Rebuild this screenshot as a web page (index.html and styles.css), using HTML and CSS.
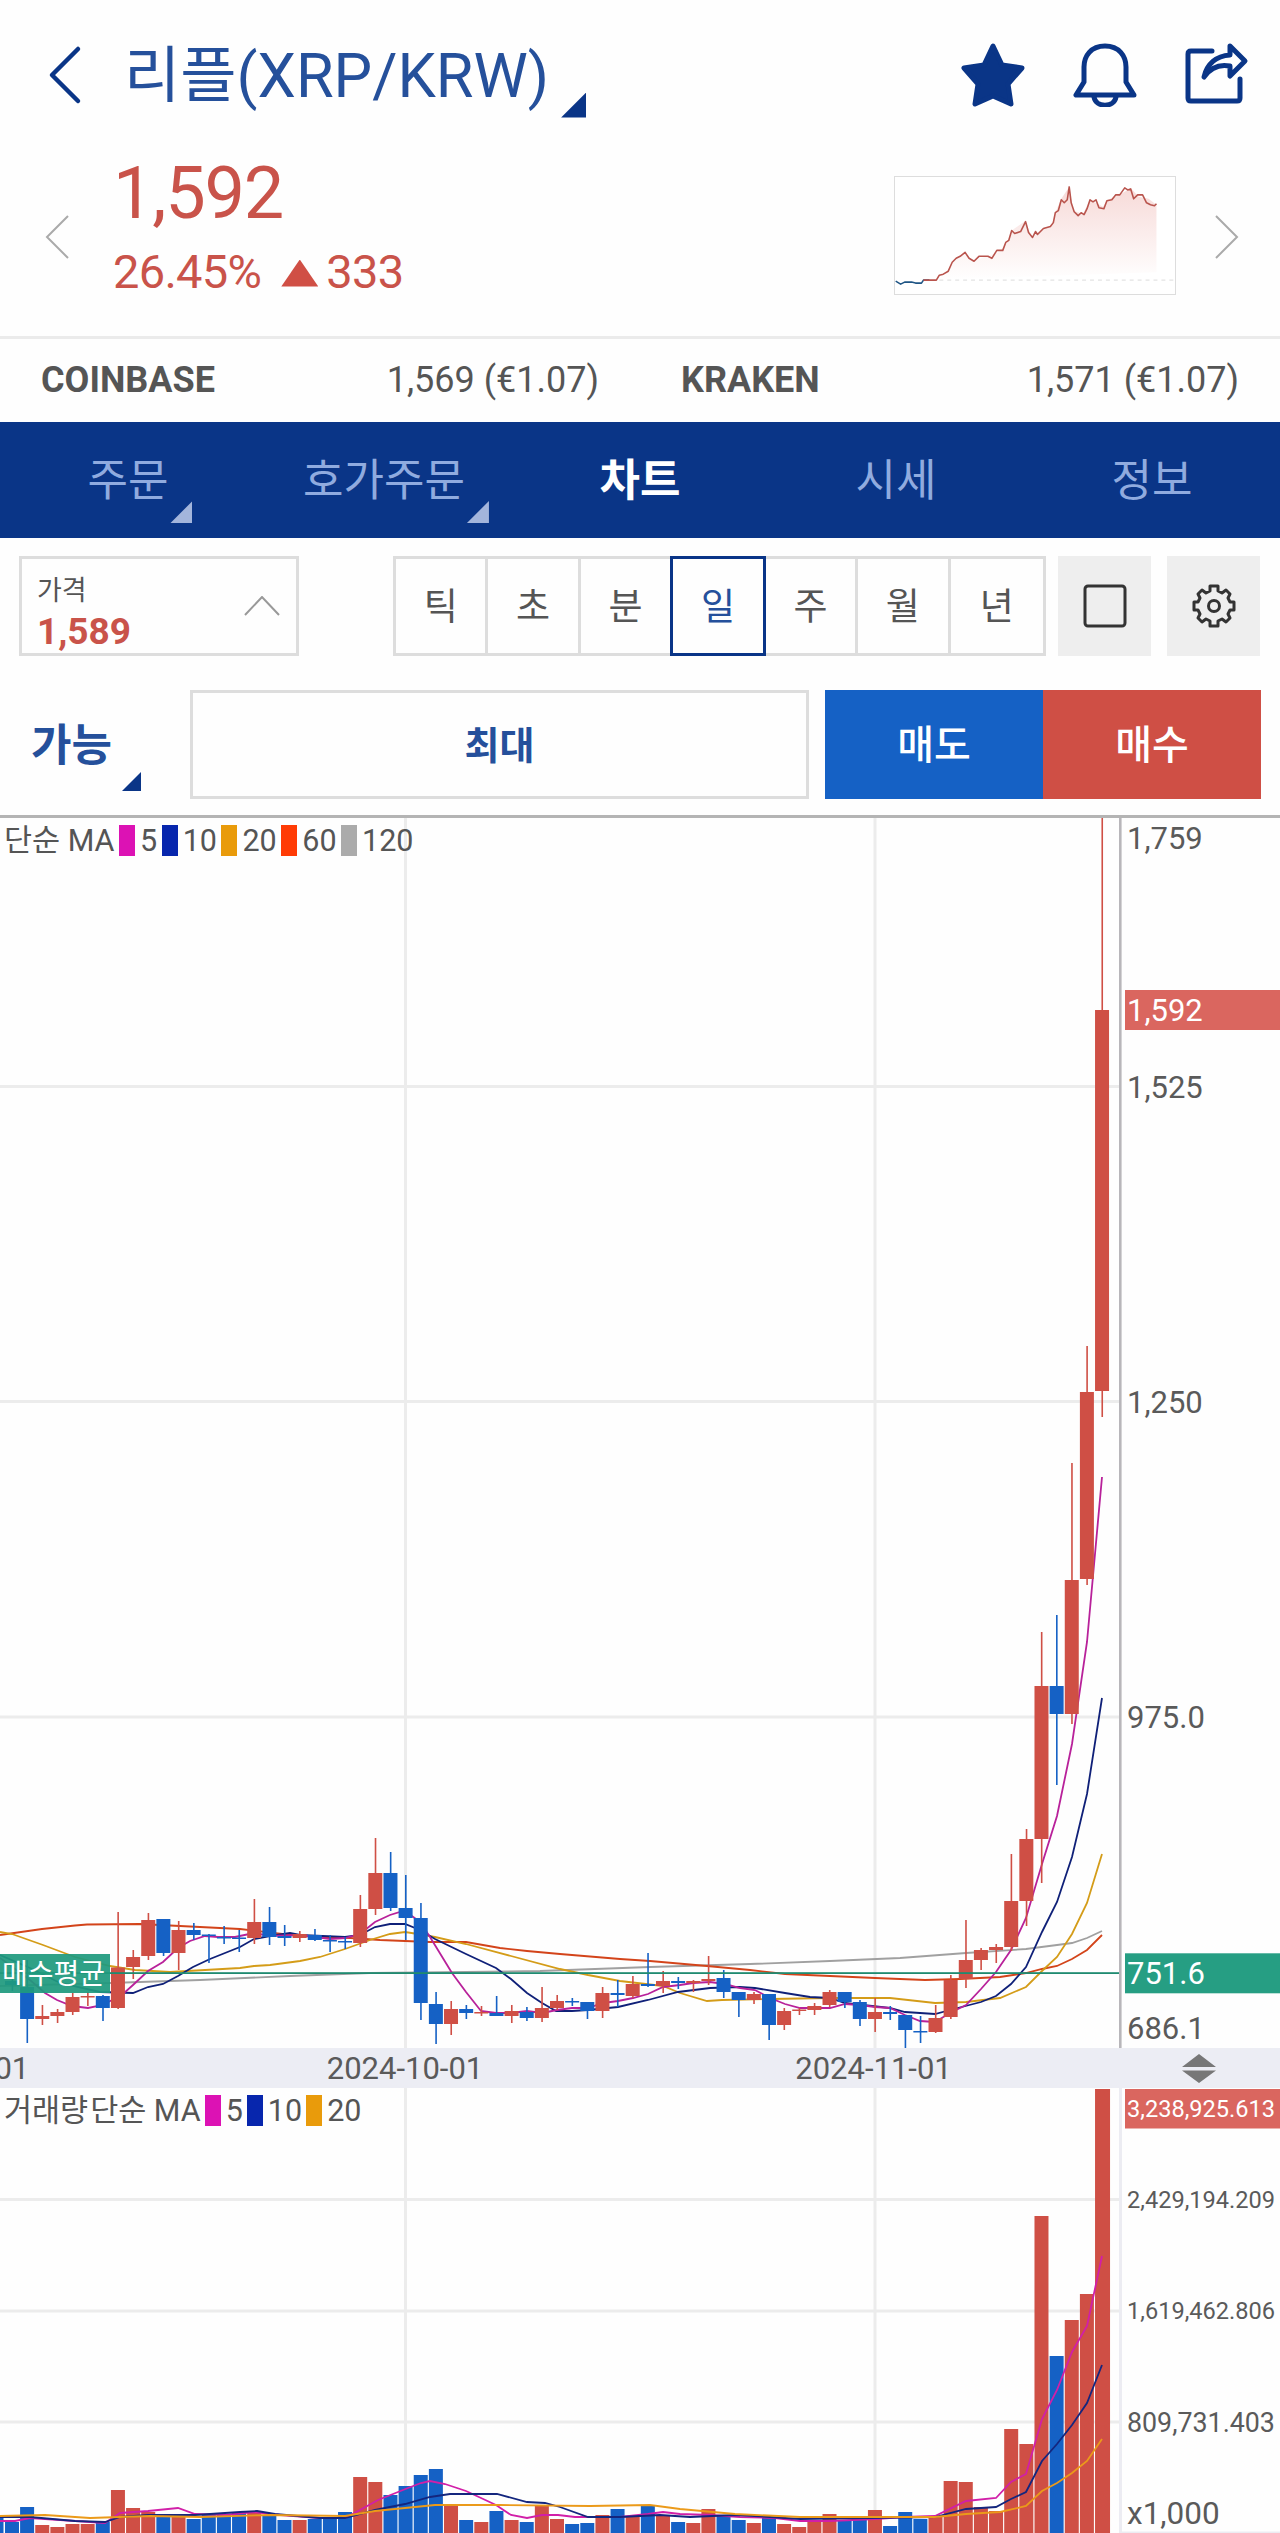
FILE: index.html
```html
<!DOCTYPE html>
<html lang="ko">
<head>
  <meta charset="UTF-8" />
  <meta name="viewport" content="width=device-width, initial-scale=1.0" />
  <title>리플(XRP/KRW)</title>
  <link rel="stylesheet" href="styles.css">
</head>
<body>
  <header class="top-bar">
    <svg class="back" viewBox="0 0 40 64"><path d="M33 6 L7 32 L33 58" /></svg>
    <h1>리플(XRP/KRW)</h1>
    <i class="corner title-corner"></i>
    <div class="top-icons">
      <svg viewBox="0 0 64 64"><path class="solid" d="M32 3 L41 22 L61 25 L47 41 L50 61 L32 53 L14 61 L17 41 L3 25 L23 22 Z" /></svg>
      <svg viewBox="0 0 64 64">
        <path d="M32 3 C18 3 11 13 11 24 V39 L3 52 H61 L53 39 V24 C53 13 46 3 32 3 Z" />
        <path d="M21 54 C23 65 41 65 43 54" />
      </svg>
      <svg viewBox="0 0 64 64">
        <path d="M27 8 H6 Q3 8 3 11 V55 Q3 58 6 58 H52 Q55 58 55 55 V36" />
        <path d="M45 3 L60 18 L45 33 V23 C35 21 26 24 19 34 C22 21 31 13 45 12 Z" />
      </svg>
    </div>
  </header>

  <section class="price">
    <svg class="side" viewBox="0 0 24 44"><path d="M23 1 L2 22 L23 43" /></svg>
    <div class="price-now">
      <div class="last">1,592</div>
      <div class="change"><span>26.45%</span><i class="up"></i><span>333</span></div>
    </div>
    <svg class="spark" viewBox="0 0 281 118">
      <defs>
        <linearGradient id="fade" x1="0" y1="0" x2="0" y2="1">
          <stop offset="0" stop-color="#f7dad8" />
          <stop offset="1" stop-color="#fff" />
        </linearGradient>
      </defs>
      <path fill="url(#fade)" d="M28 104 L41 103 L53 95 L59 85 L69 77 L78 85 L95 79 L104 76 L112 67 L117 54 L131 44 L137 61 L148 52 L157 49 L161 36 L167 22 L175 10 L179 34 L189 37 L196 23 L209 30 L214 23 L226 18 L237 11 L245 20 L255 22 L263 28 L263 96 Z" />
      <path class="dash" d="M44 104 H281" />
      <path class="blue" d="M0 105 L5 108 L9 106 L16 106 L20 107 L26 107 L28 104 L34 104" />
      <path class="red" d="M28 104 L41 104 L44 99 L48 98 L53 95 L57 86 L61 82 L65 80 L70 76 L74 82 L79 85 L84 80 L93 80 L97 82 L102 74 L108 74 L111 66 L114 64 L117 54 L120 57 L126 55 L131 45 L134 56 L138 61 L141 55 L143 58 L149 52 L156 50 L159 46 L161 36 L164 34 L167 23 L170 26 L173 23 L175 10 L177 26 L180 35 L184 39 L187 36 L190 38 L193 32 L196 23 L199 25 L202 23 L205 31 L210 32 L213 24 L218 23 L222 18 L226 18 L231 11 L234 13 L237 12 L240 22 L244 18 L249 18 L253 26 L257 28 L261 29 L263 27" />
    </svg>
    <svg class="side" viewBox="0 0 24 44"><path d="M1 1 L22 22 L1 43" /></svg>
  </section>

  <section class="compare">
    <div><b>COINBASE</b><span>1,569 (€1.07)</span></div>
    <div><b>KRAKEN</b><span>1,571 (€1.07)</span></div>
  </section>

  <nav class="tabs">
    <a>주문<i class="corner"></i></a>
    <a>호가주문<i class="corner"></i></a>
    <a class="active">차트</a>
    <a>시세</a>
    <a>정보</a>
  </nav>

  <div class="toolbar">
    <div class="price-select">
      <div>
        <small>가격</small>
        <strong>1,589</strong>
      </div>
      <svg viewBox="0 0 36 20"><path d="M1 19 L18 1 L35 19" /></svg>
    </div>
    <div class="periods">
      <span>틱</span><span>초</span><span>분</span><span class="active">일</span><span>주</span><span>월</span><span>년</span>
    </div>
    <button class="tool"><svg viewBox="0 0 44 44"><rect x="2" y="2" width="40" height="40" rx="3" /></svg></button>
    <button class="tool"><svg viewBox="0 0 44 44">
      <path d="M18 2 H26 V7 L30 9 L34 6 L38 10 L36 14 L38 18 L42 18 V26 H38 L36 30 L38 34 L34 38 L30 35 L26 37 V42 H18 V37 L14 35 L10 38 L6 34 L8 30 L6 26 H2 V18 H6 L8 14 L6 10 L10 6 L14 9 L18 7 Z" />
      <circle cx="22" cy="22" r="5.5" />
    </svg></button>
  </div>

  <div class="order-row">
    <div class="available">가능<i class="corner"></i></div>
    <div class="amount">최대</div>
    <button class="sell">매도</button>
    <button class="buy">매수</button>
  </div>

  <div class="chart">
    <div class="legend">단순 MA<i class="ma5"></i>5<i class="ma10"></i>10<i class="ma20"></i>20<i class="ma60"></i>60<i class="ma120"></i>120</div>
    <svg id="priceChart" viewBox="0 818 1280 1230"></svg>
  </div>
  <svg id="dateAxis" class="dates" viewBox="0 2048 1280 40"></svg>
  <div class="chart">
    <div class="legend volume-legend"><span>거래량</span>단순 MA<i class="ma5"></i>5<i class="ma10"></i>10<i class="ma20"></i>20</div>
    <svg id="volumeChart" viewBox="0 2088 1280 445"></svg>
  </div>

  <script>
    const RED = "#cf4f45";
    const BLUE = "#1561c5";
    const FIRST_X = 27.3;
    const STEP = 15.14;

    // direction, high, body top, body bottom, low, volume top
    const candles = [
      ["B",1960,1987,2019,2043,2507],["R",2005,2016,2019,2025,2525],["R",2009,2012,2016,2023,2527],
      ["R",1993,1997,2012,2015,2524],["R",1992,1996,1997.5,2006,2524],["B",1995,1996,2008,2021,2522],
      ["R",1912,1967.5,2008,2009,2490],["R",1950,1957,1967,1979,2508],["R",1913,1920,1956,1960,2512],
      ["B",1919,1919,1953,1956,2517],["R",1921,1930,1953,1970,2517],["B",1923,1930,1935,1940,2519],
      ["B",1934,1934.5,1936,1963,2515],["B",1926,1937,1938.5,1944,2514],["B",1930,1937.5,1939,1952,2513],
      ["R",1899,1922,1938,1944,2513],["B",1907,1922,1937,1945,2516],["B",1925,1936,1938,1946,2520],
      ["R",1931,1934,1938,1942,2520],["B",1929,1935,1940,1941,2519],["B",1935,1940,1941.5,1952,2518],
      ["B",1937,1941,1942.5,1949,2512],["R",1895,1909,1943,1947,2477],["R",1838,1873,1909,1915,2482],
      ["B",1852,1873,1908,1911,2495],["B",1875,1908,1918,1940,2486],["B",1903,1918,2003,2020,2475],
      ["B",1992,2004,2024,2044,2469],["R",2001,2009,2024,2035,2504],["B",2005,2009,2013,2019,2520],
      ["R",2006,2012,2013.5,2016,2522],["B",1996,2013,2016,2016,2511],["R",2005,2011,2016,2023,2520],
      ["B",2007,2012,2018,2021,2522],["R",1987,2008,2018,2022,2505],["R",1995,2001,2008,2010,2519],
      ["B",1998,2001,2002.5,2006,2524],["B",2002,2002,2011,2019,2523],["R",1987,1993,2011,2018,2515],
      ["B",1980,1993,1995,2007,2509],["R",1976,1984,1996,1998,2517],["B",1953,1984,1986,1987,2506],
      ["R",1971,1981,1986,1993,2516],["B",1977,1981,1983,1989,2522],["R",1980,1981,1983,1992,2523],
      ["R",1956,1979,1981,1985,2509],["B",1970,1978,1992,1998,2515],["B",1992,1992,2000,2017,2520],
      ["R",1992,1994,2000,2004,2523],["B",1994,1994,2025,2040,2517],["R",2008,2011,2025,2030,2524],
      ["R",2008,2009.5,2011,2015,2527],["R",2003,2006,2010,2015,2520],["R",1990,1992,2005,2007,2514],
      ["B",1992,1992,2002,2008,2520],["B",2000,2002,2019,2026,2519],["R",1998,2012,2019,2032,2510],
      ["B",2006,2012,2014,2020,2526],["B",2015,2015,2030,2048,2512],["B",2016,2031,2032.5,2043,2519],
      ["R",2005,2018,2032,2033,2517],["R",1975,1980,2017,2019,2481],["R",1920,1960,1979,1988,2482],
      ["R",1948,1950,1960,1970,2507],["R",1944,1947,1950,1963,2511],["R",1854,1901,1947,1951,2429],
      ["R",1829,1839,1901,1926,2444],["R",1632,1686,1839,1883,2216],["B",1615,1686,1714,1785,2356],
      ["R",1463,1580,1714,1724,2320],["R",1346,1392,1579,1585,2294],["R",818,1010,1391,1417,2089]
    ];

    const priceLines = {
      "#a0a0a0": "0,1986 110,1983 200,1980 290,1976 370,1973 466,1972 540,1971 650,1967 750,1964 830,1961 900,1958 966,1953 1026,1949 1057,1945 1072,1943 1087,1938 1102,1931",
      "#d3441a": "0,1935 42,1929 75,1925.5 87,1924.5 140,1924 200,1927 240,1929 300,1936 350,1938 380,1940 430,1942 466,1942 500,1948 527,1951 560,1954 620,1959 650,1961 707,1966 750,1970 785,1974 830,1976 875,1978 925,1980 960,1979 1000,1977 1026,1973 1042,1969 1057,1966 1072,1959 1087,1950 1102,1935",
      "#d49c18": "0,1932 12,1934 43,1945 75,1957 110,1966 135,1970 170,1972 205,1970 240,1968 254,1966 270,1965 300,1961 320,1957 345,1949 370,1940 390,1934 405,1932 418,1934 435,1937 466,1944 511,1956 560,1969 588,1975 620,1981 663,1986 680,1993 707,2001 722,2000 770,1999 830,1998 890,1998 935,2003 966,2002 1000,1998 1026,1987 1042,1971 1057,1957 1072,1934 1087,1903 1102,1854",
      "#0f2078": "0,1955 30,1968 60,1983 100,1992 133,1993 148,1987 163,1984 178,1976 193,1967 210,1959 240,1947 254,1939 270,1936 290,1933 300,1935 345,1937 360,1935 375,1927 390,1924 405,1924 420,1930 435,1939 466,1954 496,1968 511,1979 527,1993 542,2003 556,2011 572,2011 588,2010 618,2007 648,2000 678,1992 710,1988 740,1987 755,1988 785,1993 810,1997 830,1998 845,2003 890,2008 905,2012 935,2014 950,2010 981,2002 996,1996 1011,1984 1026,1967 1042,1932 1057,1902 1072,1857 1087,1794 1102,1698",
      "#b8219a": "0,1958 30,1980 45,1993 57,2000 72,2006 88,2008 103,2005 123,1994 133,1985 148,1971 163,1962 178,1948 190,1941 205,1936 218,1937 235,1937 254,1933 270,1936 300,1935 330,1939 345,1938 360,1934 375,1922 390,1915 400,1912 412,1916 420,1922 430,1937 452,1973 466,1992 481,2011 496,2013 511,2013 527,2011 542,2013 557,2010 572,2008 588,2008 603,2003 618,2001 633,1998 648,1994 663,1987 680,1985 693,1983 710,1982 725,1984 740,1988 755,1990 770,1998 785,2004 800,2008 830,2008 845,2004 860,2005 875,2007 890,2008 905,2015 920,2021 935,2022 950,2013 966,2005 981,1989 996,1972 1011,1950 1026,1918 1042,1864 1057,1816 1072,1744 1087,1642 1102,1477"
    };

    const volumeLines = {
      "#d11fa8": "0,2521 15,2521 30,2518 45,2519 105,2523 120,2513 148,2511 178,2508 195,2514 225,2515 254,2512 280,2515 320,2518 345,2518 360,2510 378,2500 393,2494 408,2488 421,2483 430,2481 445,2484 466,2491 496,2505 511,2515 527,2518 542,2515 558,2515 575,2517 620,2517 648,2514 663,2512 680,2514 710,2515 740,2517 775,2518 800,2521 830,2521 875,2519 905,2517 935,2516 966,2501 996,2498 1011,2482 1026,2474 1042,2419 1057,2390 1072,2352 1087,2326 1102,2256",
      "#14267e": "0,2517 30,2517 75,2521 105,2522 120,2517 148,2515 195,2515 240,2512 257,2511 275,2514 320,2518 345,2518 375,2510 405,2504 430,2497 450,2494 497,2494 527,2502 545,2503 560,2507 588,2517 620,2517 660,2515 690,2517 735,2515 770,2517 800,2519 935,2517 966,2509 996,2507 1011,2499 1026,2492 1042,2461 1057,2444 1072,2425 1087,2403 1102,2365",
      "#eb9a1a": "0,2516 45,2515 90,2518 150,2516 200,2517 270,2515 345,2516 375,2511 405,2508 435,2505 500,2505 590,2506 650,2505 680,2509 735,2514 800,2517 875,2517 935,2517 966,2514 1000,2512 1026,2506 1042,2491 1057,2483 1072,2473 1087,2461 1102,2439"
    };

    function rect(x, y, w, h, fill) {
      return `<rect x="${x}" y="${y}" width="${w}" height="${h}" fill="${fill}"/>`;
    }

    function label(x, y, text, size = 31, cls = "") {
      return `<text x="${x}" y="${y + size * 0.355}" font-size="${size}" class="${cls}">${text}</text>`;
    }

    function lines(set) {
      return Object.keys(set).map(c => `<polyline points="${set[c]}" stroke="${c}"/>`).join("");
    }

    function grid(rows, top, bottom) {
      return rows.map(y => rect(0, y - 1.5, 1119, 3, "#ececec")).join("") +
        [405.5, 875].map(x => rect(x - 1.5, top, 3, bottom - top, "#ececec")).join("");
    }

    function drawPrice() {
      let out = grid([1086.5, 1401.5, 1717], 818, 2048) + lines(priceLines);
      out += rect(11.6, 1975, 1.6, 16, BLUE) + rect(5, 1981, 14, 4, BLUE);
      candles.forEach(([dir, high, top, bottom, low], i) => {
        const x = FIRST_X + i * STEP;
        const color = dir === "R" ? RED : BLUE;
        out += rect(x - 0.8, high, 1.6, low - high, color);
        out += rect(x - 7.2, top, 14, bottom - top, color);
      });
      out += rect(0, 1972.2, 1120, 1.8, "#1f8a70");
      out += rect(1119, 818, 2.6, 1230, "#b8b6ba");
      out += rect(0, 1954, 110, 39, "rgba(31,154,126,.93)") + label(2, 1974, "매수평균", 28, "white");
      out += label(1127, 838, "1,759") + label(1127, 1087, "1,525") + label(1127, 1402, "1,250");
      out += label(1127, 1717, "975.0") + label(1127, 2028, "686.1");
      out += rect(1125, 990, 155, 40, "#da665f") + label(1127, 1010, "1,592", 31, "white");
      out += rect(1125, 1953.3, 155, 40, "#269e83") + label(1127, 1973, "751.6", 31, "white");
      document.getElementById("priceChart").innerHTML = out;
    }

    function drawDates() {
      document.getElementById("dateAxis").innerHTML =
        label(-49, 2068, "2024-09-01", 31, "mid") +
        label(405, 2068, "2024-10-01", 31, "mid") +
        label(873.5, 2068, "2024-11-01", 31, "mid") +
        `<path fill="#777" d="M1182 2067 L1199 2054 L1216 2067 Z M1182 2070.5 L1216 2070.5 L1199 2083 Z"/>`;
    }

    function drawVolume() {
      let out = grid([2199.5, 2311, 2422], 2088, 2533);
      out += rect(1119, 2088, 3, 445, "#ececf2");
      out += rect(-10, 2517, 13.5, 16, BLUE) + rect(5, 2522, 14, 11, BLUE);
      candles.forEach((c, i) => {
        const x = FIRST_X + i * STEP;
        out += rect(x - 7.2, c[5], i === 71 ? 15 : 14, 2533 - c[5], c[0] === "R" ? RED : BLUE);
      });
      out += lines(volumeLines);
      out += rect(1125, 2089, 155, 39.5, "#da665f") + label(1127, 2109, "3,238,925.613", 23.6, "white");
      out += label(1127, 2200, "2,429,194.209", 23.6) + label(1127, 2311, "1,619,462.806", 23.6);
      out += label(1127, 2422.5, "809,731.403", 26.8) + label(1127, 2512.5, "x1,000", 31.5);
      out += rect(1122, 2531.5, 158, 1.5, "#ececf2");
      document.getElementById("volumeChart").innerHTML = out;
    }

    drawPrice();
    drawDates();
    drawVolume();
  </script>
</body>
</html>
```
FILE: styles.css
```css
* {
  box-sizing: border-box;
}
body {
  margin: 0;
  width: 1280px;
  font-family: Roboto, 'Noto Sans CJK KR', sans-serif;
  background: #fefefe;
  color: #555;
}
svg {
  display: block;
  fill: none;
}
button {
  border: none;
  padding: 0;
  font-family: inherit;
}
.corner {
  display: block;
  width: 23px;
  height: 23px;
  background: #0a3587;
  clip-path: polygon(100% 0, 100% 100%, 0 100%);
}

/* header */
.top-bar {
  display: flex;
  align-items: center;
  height: 150px;
  padding: 0 31px 0 45px;
}
.back {
  width: 40px;
  height: 64px;
  stroke: #0a3587;
  stroke-width: 4.5;
  stroke-linecap: round;
  stroke-linejoin: round;
}
h1 {
  margin: 2px 0 0 39px;
  font-size: 61.2px;
  font-weight: 400;
  line-height: 80px;
  color: #25509b;
  white-space: nowrap;
}
.title-corner {
  width: 25px;
  height: 25px;
  margin: 60px 0 0 12px;
}
.top-icons {
  display: flex;
  gap: 48px;
  margin-left: auto;
}
.top-icons svg {
  width: 64px;
  height: 64px;
  stroke: #0a3587;
  stroke-width: 5;
  stroke-linejoin: round;
  stroke-linecap: round;
}
.top-icons .solid {
  fill: #0a3587;
}

/* price */
.price {
  display: flex;
  align-items: flex-start;
  height: 189px;
  padding: 0 41px 0 45px;
  border-bottom: 3px solid #ebebeb;
  color: #c9534a;
}
.side {
  width: 24px;
  height: 44px;
  margin-top: 65px;
  stroke: #aaa;
  stroke-width: 2;
}
.price-now {
  margin-left: 44px;
}
.last {
  font-size: 72px;
  line-height: 84px;
  margin-top: 2px;
  letter-spacing: -1.2px;
}
.change {
  display: flex;
  align-items: center;
  font-size: 47px;
  line-height: 56px;
  margin-top: 8px;
  letter-spacing: -0.7px;
}
.up {
  width: 37px;
  height: 27px;
  margin: 2px 8px 0 20px;
  background: #d04f45;
  clip-path: polygon(50% 0, 100% 100%, 0 100%);
}
.spark {
  width: 282px;
  height: 119px;
  margin: 26px 39px 0 auto;
  border: 1px solid #ddd;
  background: #fff;
}
.spark .red, .spark .blue {
  stroke: #b9544d;
  stroke-width: 1.6;
  stroke-linejoin: round;
}
.spark .blue {
  stroke: #1f5585;
}
.spark .dash {
  stroke: #e4e4e4;
  stroke-width: 1.2;
  stroke-dasharray: 4 4;
}

/* other exchanges */
.compare {
  display: grid;
  grid-template-columns: 1fr 1fr;
  height: 83px;
  font-size: 36px;
}
.compare div {
  display: flex;
  justify-content: space-between;
  align-items: center;
  padding: 0 41px 2px;
  line-height: 40px;
}

/* tabs */
.tabs {
  display: grid;
  grid-template-columns: repeat(5, 1fr);
  height: 116px;
  background: #0a3587;
}
.tabs a {
  position: relative;
  justify-self: center;
  line-height: 119px;
  font-size: 44px;
  color: #90abdf;
}
.tabs .active {
  color: #fff;
  font-weight: 700;
}
.tabs .corner {
  position: absolute;
  right: -24px;
  top: 79px;
  width: 22px;
  height: 22px;
  background: #a3b5dc;
}

/* chart toolbar */
.toolbar {
  display: flex;
  height: 152px;
  padding: 18px 19px 0;
}
.toolbar > * {
  height: 100px;
}
.price-select {
  display: flex;
  justify-content: space-between;
  width: 280px;
  margin-right: 94px;
  padding: 17px 16px 0 15px;
  border: 3px solid #ddd;
}
.price-select small, .price-select strong {
  display: block;
}
.price-select small {
  font-size: 27px;
  line-height: 30px;
}
.price-select strong {
  font-size: 37px;
  line-height: 42px;
  margin-top: 5px;
  color: #c9534a;
}
.price-select svg {
  width: 36px;
  height: 20px;
  margin-top: 20px;
  stroke: #999;
  stroke-width: 2;
}
.periods {
  display: grid;
  grid-template-columns: repeat(7, 1fr);
  width: 653px;
  margin-right: 12px;
  border: 3px solid #ddd;
  font-size: 37px;
}
.periods span {
  padding-top: 4px;
  text-align: center;
  line-height: 90px;
  border-right: 3px solid #ddd;
}
.periods span:last-child {
  border-right: none;
}
.periods .active {
  margin: -3px 0 -3px -3px;
  border: 3px solid #0a3587;
  color: #25509b;
}
.tool {
  display: flex;
  align-items: center;
  justify-content: center;
  width: 93px;
  margin-right: 16px;
  background: #eee;
}
.tool svg {
  width: 44px;
  height: 44px;
  stroke: #333;
  stroke-width: 3;
  stroke-linejoin: round;
}
.tool:last-child {
  margin-right: 0;
}

/* quick order */
.order-row {
  display: flex;
  height: 128px;
  padding: 0 19px;
  border-bottom: 3px solid #b4b4b4;
}
.order-row > * {
  height: 109px;
  line-height: 112px;
}
.available {
  position: relative;
  width: 171px;
  padding-left: 12px;
  font-size: 44px;
  font-weight: 700;
  color: #25509b;
}
.available .corner {
  position: absolute;
  left: 103px;
  top: 82px;
  width: 19px;
  height: 19px;
}
.amount {
  width: 619px;
  margin-right: 16px;
  border: 3px solid #ddd;
  line-height: 107px;
  text-align: center;
  font-size: 38px;
  font-weight: 700;
  color: #25509b;
}
.sell, .buy {
  width: 218px;
  font-size: 40px;
  font-weight: 500;
  color: #fff;
}
.sell {
  background: #1561c5;
}
.buy {
  background: #cf4f45;
}

/* charts */
.chart {
  position: relative;
}
.chart svg, .dates {
  width: 1280px;
}
.chart text, .dates text {
  fill: #5a5a5a;
}
.chart .white {
  fill: #fff;
}
.dates .mid {
  text-anchor: middle;
}
.dates {
  background: #ecedf4;
}
.chart polyline {
  stroke-width: 1.8;
}
.legend {
  position: absolute;
  left: 4px;
  top: 7px;
  display: flex;
  align-items: center;
  font-size: 30.5px;
  line-height: 31px;
}
.legend i {
  width: 16px;
  height: 31px;
  margin: 0 5px 0 4.5px;
}
.legend span {
  margin-right: 2px;
}
.volume-legend i {
  margin-left: 4px;
}
.ma5 { background: #dc12b4; }
.ma10 { background: #0726ad; }
.ma20 { background: #e99b0b; }
.ma60 { background: #ff3b05; }
.ma120 { background: #ababab; }
```
